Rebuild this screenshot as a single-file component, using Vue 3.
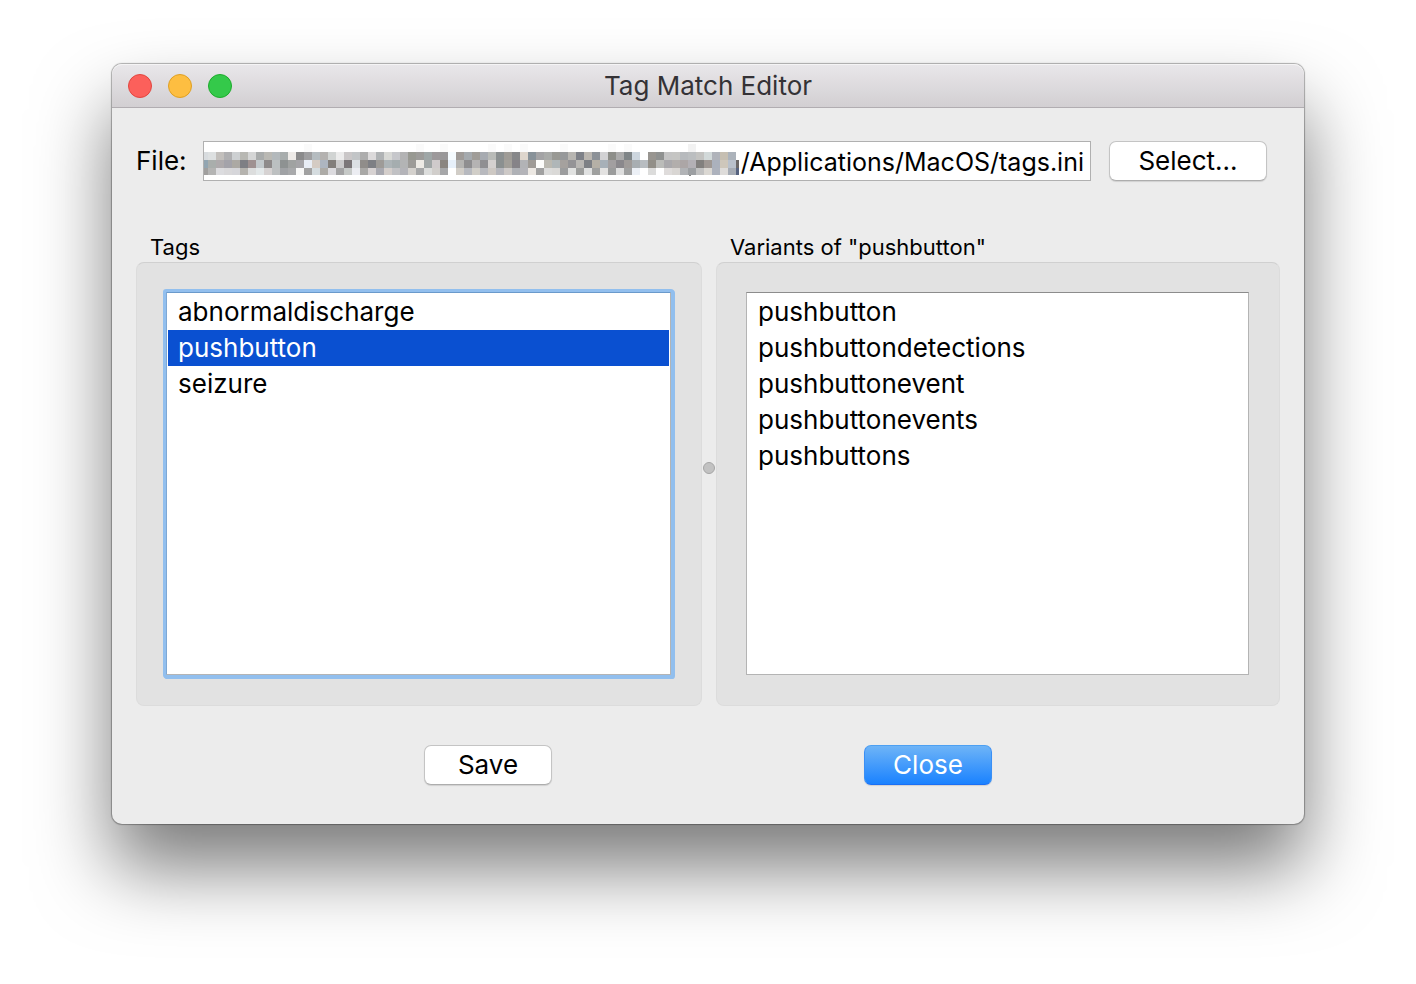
<script setup>
import { computed, ref } from 'vue'

const tags = [
  { name: 'abnormaldischarge', variants: ['abnormaldischarge', 'abnormaldischarges'] },
  {
    name: 'pushbutton',
    variants: ['pushbutton', 'pushbuttondetections', 'pushbuttonevent', 'pushbuttonevents', 'pushbuttons'],
  },
  { name: 'seizure', variants: ['seizure', 'seizures'] },
]
const selected = ref('pushbutton')
const variants = computed(() => tags.find((tag) => tag.name === selected.value).variants)
const path = ref('/Applications/MacOS/tags.ini')

/* Colours of the pixelated part of the path, one row of cells per line. */
const mosaic = [
  'd8dcdf dde0e1 c2bfbc afafb1 cdd0d2 b8b8b3 d5d6d6 a9acac bab9b4 b3b9bc a8adad eeebe8 8b8b8c 9f9fa1 b5bcc0 b4b2b0 d1d4d3 ececec cac7c8 c2c5c7 adadad dcdadb b0b3b5 d8d9d6 c6c7cb b3b3b4 989992 9d9c9a 9fa7a7 9d999b 999899 f5fbff 9f9b98 a5aaae a09d98 a7abb1 b9bbb8 8b9091 9f9c97 87888a ded6cd 889299 a3a3a5 a9aba9 999994 96989a b7b5b1 7e8188 bab6b0 8c9197 d2d2d4 8d8e89 ababab 7f8587 cdd6de ffffff 989590 8f9190 c4c4c4 c5c5c3 b7babd bbbec0 c3c3c1 d2d9d9 b0b3ba c6bfb2 acb3bb ffffff',
  '92a5b1 a9aeac aeaaac a4a3aa aca9a4 7e7f84 9f9191 c3c9cc 8e8a8a bbc0c1 8e9292 a0a2a1 a5a4a7 e8edf5 d4cbc3 adb5c0 827e7b cac9ca 7b7678 dce0e4 908d8a 7e7f84 9e9b98 adb4b7 a5adaf b3b4b5 9d9b98 edeae5 a0a6a6 cfcacb 8a8580 e7f0fa b5b4b2 8f8e90 b5b3b3 908f92 d4d0cf 8b9090 a29f99 868388 b2b3b6 9f9b96 fcfcfa bbb9b1 afb6b8 a5a19e 949396 b9b7b4 7d8085 b5b0a6 a7b0b8 a29fa0 8a888c 9f9b99 a8aeb2 b8bdc1 928f88 bbbcb9 aaa9ac b2aeac aca6a6 b3b0b5 82807e 9f9894 abb1bd cec7bb b9c1cc 6b6868',
  'a09f9e b4b4b3 dcdcdf d9d8da d6d6da b5b3ae dcdddd e3e8e9 d6d2d2 bdc0c1 a0a2a5 a8a9ab f8f8f7 a1a1a1 d5dcdf adaba7 dcdbdf a3a3a4 c6c9c7 ecedf2 a9a8a6 d7d2d2 a9a9b0 d4cecb c1c1c4 b4b4b9 d4d1cd a6a7a8 dcdddc d1cecb a6a7a9 ffffff d1cdc7 b7b9bf d1cec8 b8b9be cdc8c3 b5b6bc cdc9c7 afb1b6 b4b4b9 ece8e3 a0a0a0 dcdcdb dad9d7 9c9d9e e1e2e1 9c9d9c e0e1e1 9fa09f e3e2e1 9b9c9c dedede 9fa0a0 ecf0f6 ffffff dcdcdb ffffff dfdcdb d9d6d3 b1b3b6 9c9fa2 c2c2c2 dbd8d3 adb2bd dedcda a6acb5 566380',
].map((row) => row.split(' ').map((hex) => '#' + hex))
const faint = [13, 27, 30, 36, 38, 40, 45, 51, 53]
</script>

<template>
  <main class="desktop">
    <section class="window" aria-labelledby="window-title">
      <header class="titlebar">
        <div class="lights">
          <button type="button" class="light red" aria-label="Close window"></button>
          <button type="button" class="light yellow" aria-label="Minimise window"></button>
          <button type="button" class="light green" aria-label="Zoom window"></button>
        </div>
        <h1 id="window-title">Tag Match Editor</h1>
      </header>

      <div class="content">
        <div class="file-row">
          <label for="file-path">File:</label>
          <div class="path-field">
            <svg class="mosaic" width="535" height="38" viewBox="204 142 535 38" shape-rendering="crispEdges" aria-hidden="true">
              <rect v-for="k in faint" :key="k" :x="200 + k * 8" y="144" width="8" height="8" fill="#fafafa" />
              <rect x="688" y="144" width="8" height="8" fill="#f2f2f2" />
              <g v-for="(row, r) in mosaic" :key="r">
                <rect v-for="(color, c) in row" :key="c" :x="200 + c * 8" :y="152 + r * 8" width="8" :height="r === 2 ? 7 : 8" :fill="color" />
              </g>
              <rect x="689" y="175" width="2" height="1" fill="#888888" />
            </svg>
            <input id="file-path" v-model="path" type="text" spellcheck="false" />
          </div>
          <button type="button" class="push select">Select...</button>
        </div>

        <div class="panes">
          <section class="pane tags">
            <h2 id="tags-title">Tags</h2>
            <div class="group">
              <ul class="list focused" role="listbox" aria-labelledby="tags-title" tabindex="0">
                <li
                  v-for="tag in tags"
                  :key="tag.name"
                  role="option"
                  :aria-selected="tag.name === selected"
                  :class="{ chosen: tag.name === selected }"
                  @click="selected = tag.name"
                >{{ tag.name }}</li>
              </ul>
            </div>
          </section>
          <div class="splitter" role="separator" aria-orientation="vertical"><span class="grip"></span></div>
          <section class="pane">
            <h2 id="variants-title">Variants of "{{ selected }}"</h2>
            <div class="group">
              <ul class="list" role="listbox" aria-labelledby="variants-title" tabindex="0">
                <li v-for="name in variants" :key="name" role="option" aria-selected="false">{{ name }}</li>
              </ul>
            </div>
          </section>
        </div>
      </div>

      <footer class="actions">
        <button type="button" class="push">Save</button>
        <button type="button" class="push primary">Close</button>
      </footer>
    </section>
  </main>
</template>

<style>
body {
  background: #ffffff;
}
</style>

<style scoped>
* {
  box-sizing: border-box;
}
.desktop {
  display: flex;
  min-height: 100vh;
  padding: 64px 112px 160px;
  overflow: hidden;
  font-family: Inter, "Liberation Sans", sans-serif;
  font-size: 26px;
  line-height: 36px;
  color: #000000;
}
.window {
  display: flex;
  flex: 1;
  flex-direction: column;
  min-width: 0;
  border-radius: 10px;
  background: #ececec;
  box-shadow: 0 0 1px 1px rgba(0, 0, 0, 0.3), 0 44px 76px rgba(0, 0, 0, 0.52);
}
.titlebar {
  display: grid;
  grid-template-columns: 1fr auto 1fr;
  align-items: center;
  height: 44px;
  padding: 0 16px;
  border-bottom: 1px solid #b1adb1;
  border-radius: 10px 10px 0 0;
  background: linear-gradient(#e9e7ea, #d2cfd2);
  box-shadow: inset 0 1px #f5f4f5;
}
.lights {
  display: flex;
  gap: 16px;
}
.light {
  width: 24px;
  height: 24px;
  padding: 0;
  border: 1px solid;
  border-radius: 50%;
}
.red {
  border-color: #e2463f;
  background: #fc605b;
}
.yellow {
  border-color: #dfa023;
  background: #fdbe41;
}
.green {
  border-color: #1dac2c;
  background: #34c94a;
}
h1,
h2 {
  margin: 0;
  font-weight: 400;
}
h1 {
  font-size: 26px;
  color: #343236;
}
.content {
  display: flex;
  flex: 1;
  flex-direction: column;
  padding: 33px 24px 0;
}
.file-row {
  display: flex;
  align-items: center;
  padding-right: 13px;
}
.file-row label {
  width: 49px;
}
.path-field {
  display: flex;
  flex: 1;
  min-width: 0;
  height: 40px;
  margin: 0 18px;
  border: 1px solid #b0b0b0;
  background: #ffffff;
}
.mosaic {
  flex: none;
}
input {
  flex: 1;
  min-width: 0;
  padding: 2px 6px 0 0;
  border: 0;
  outline: 0;
  background: transparent;
  font: inherit;
  font-size: 25px;
  color: inherit;
  text-align: right;
}
.push {
  width: 128px;
  height: 40px;
  padding: 0;
  border: 1px solid #c4c4c4;
  border-bottom-color: #adadad;
  border-radius: 7px;
  background: #ffffff;
  box-shadow: 0 1px 1px rgba(0, 0, 0, 0.12);
  font: inherit;
  color: inherit;
}
.select {
  width: 158px;
}
.primary {
  border-color: #4da0f2 #3a8ff5 #1a6ff5;
  background: linear-gradient(#6eb4f7, #1a82ff);
  color: #ffffff;
}
.panes {
  display: flex;
  flex: 1;
  margin-top: 52px;
}
.pane {
  display: flex;
  flex: 1 1 0;
  flex-direction: column;
  min-width: 0;
}
.tags {
  flex-basis: 2px;
}
h2 {
  padding-left: 14px;
  font-size: 22px;
  line-height: 29px;
}
.group {
  display: flex;
  flex: 1;
  padding: 29px 30px 30px 29px;
  border: 1px solid #dcdcdc;
  border-top-color: #d0d0d0;
  border-radius: 8px;
  background: #e2e2e2;
}
.list {
  flex: 1;
  min-width: 0;
  margin: 0;
  padding: 1px;
  border: 1px solid #b4b4b4;
  border-top-color: #8c8c8c;
  outline: 0;
  background: #ffffff;
  list-style: none;
}
.focused {
  border-color: #6a9acb #b4b4b4 #b4b4b4 #7fa8d4;
  border-radius: 1px;
  box-shadow: 0 0 0 3px #92bfee, 1px 1px 0 3px #92bfee;
}
.list li {
  padding: 0 10px;
  cursor: default;
}
.list .chosen {
  background: #0a50d1;
  color: #ffffff;
}
.splitter {
  display: flex;
  align-items: center;
  justify-content: center;
  width: 14px;
  padding-bottom: 3px;
}
.grip {
  width: 12px;
  height: 12px;
  border: 1px solid #a6a6a6;
  border-radius: 50%;
  background: #c2c2c2;
}
.actions {
  display: flex;
  justify-content: space-evenly;
  padding: 39px 0;
}
</style>
